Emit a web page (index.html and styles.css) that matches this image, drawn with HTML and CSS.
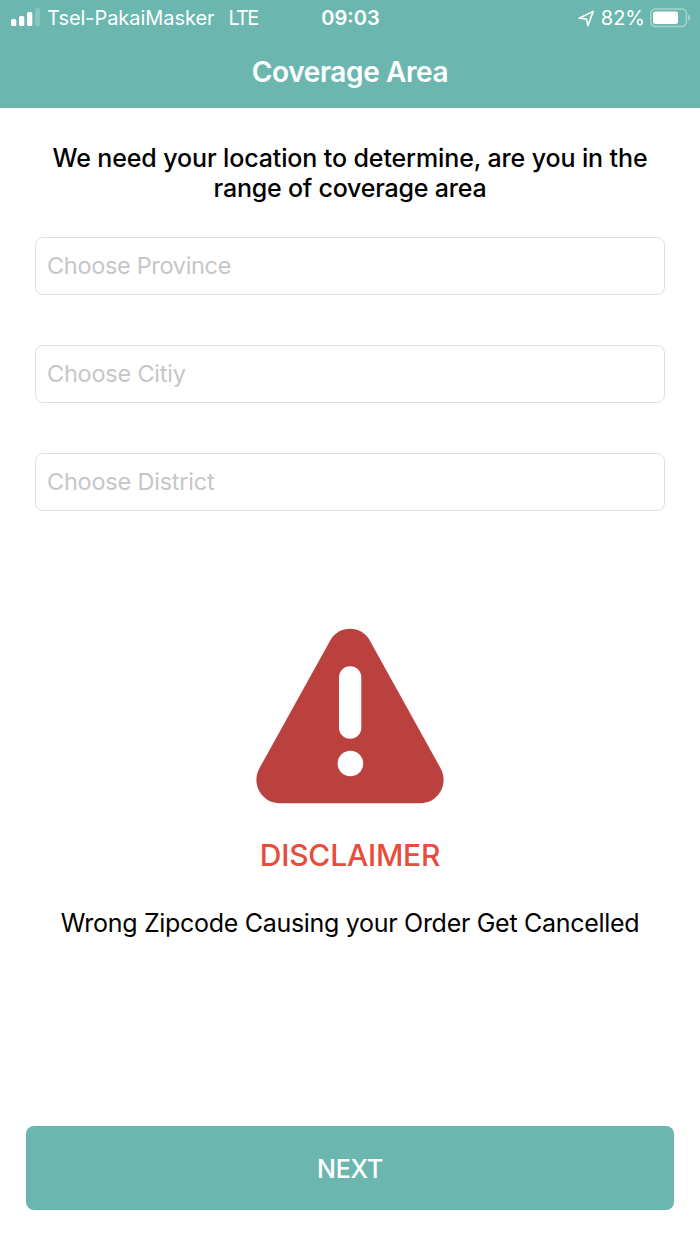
FILE: index.html
```
<!DOCTYPE html>
<html lang="en">

<head>
    <meta charset="UTF-8">
    <meta name="viewport" content="width=device-width, initial-scale=1.0">
    <title>Coverage Area</title>
    <link rel="stylesheet" href="styles.css">
</head>

<body>
    <header class="header">
        <div class="status">
            <div class="status-left">
                <svg class="signal" width="29" height="20" viewBox="0 0 29 20">
                    <rect x="0" y="11" width="5.3" height="7" rx="1.6" fill="#fff"/>
                    <rect x="8" y="8" width="5.3" height="10" rx="1.6" fill="#fff"/>
                    <rect x="16" y="4" width="5.3" height="14" rx="1.6" fill="#fff"/>
                    <rect x="24" y="0" width="5" height="18" rx="1.6" fill="#fff" opacity=".2"/>
                </svg>
                <span class="carrier">Tsel-PakaiMasker</span>
                <span class="network">LTE</span>
            </div>
            <div class="clock">09:03</div>
            <div class="status-right">
                <svg class="arrow" width="17" height="17" viewBox="0 0 17 17">
                    <path d="M1.2 8.3L15.2 1.4L9.9 15.6L8.3 9Z" fill="none" stroke="#fff" stroke-width="1.6" stroke-linejoin="round"/>
                </svg>
                <span class="percent">82%</span>
                <svg class="battery" width="41" height="20" viewBox="0 0 41 20">
                    <rect x=".8" y="1" width="35.6" height="17.6" rx="4.5" fill="none" stroke="#fff" stroke-width="1.5" opacity=".4"/>
                    <rect x="3" y="3.6" width="25" height="12.4" rx="2.3" fill="#fff"/>
                    <path d="M38.2 6.6C40.9 7.8 40.9 11.9 38.2 13.1Z" fill="#fff" opacity=".4"/>
                </svg>
            </div>
        </div>
        <h1 class="title">Coverage Area</h1>
    </header>

    <main class="content">
        <p class="intro"><span>We need your location to determine, are you in the</span><br><span class="intro-end">range of coverage area</span></p>
        <form class="form">
            <input class="field province" type="text" placeholder="Choose Province">
            <input class="field city" type="text" placeholder="Choose Citiy">
            <input class="field district" type="text" placeholder="Choose District">
        </form>
        <svg class="warning" width="188" height="176" viewBox="0 0 188 176">
            <path d="M74.5 12C83-3 105-3 113.5 12L185 141C193 157 181.500 175.200 165 175.200H23C6.500 175.200-5 157 3 141Z" fill="#bb413e"/>
            <rect x="83" y="38.3" width="22.3" height="72.5" rx="11.1" fill="#fff"/>
            <circle cx="94.4" cy="135.5" r="12.8" fill="#fff"/>
        </svg>
        <h2 class="disclaimer">DISCLAIMER</h2>
        <p class="note">Wrong Zipcode Causing your Order Get Cancelled</p>
    </main>

    <button class="next" type="button">NEXT</button>
</body>

</html>
```
FILE: styles.css
```
* {
    margin: 0;
    padding: 0;
    box-sizing: border-box;
}
body {
    display: flex;
    flex-direction: column;
    height: 1244px;
    background-color: #fff;
    font-family: Inter, "Liberation Sans", sans-serif;
    color: #000;
}
.header {
    height: 108px;
    background-color: #6bb7b0;
    color: #fff;
}
.status {
    display: grid;
    grid-template-columns: 1fr auto 1fr;
    align-items: center;
    height: 36px;
    padding: 0 9px 0 11px;
    font-size: 20px;
    white-space: nowrap;
}
.status-left,
.status-right {
    display: flex;
    align-items: center;
}
.status-right {
    justify-content: flex-end;
}
.carrier {
    margin-left: 7px;
    letter-spacing: -0.05px;
}
.network {
    margin-left: 14px;
    letter-spacing: -1.8px;
}
.clock {
    margin-right: 1px;
    font-weight: 600;
}
.percent {
    margin: 0 5px 0 6px;
}
.title {
    font-size: 28px;
    font-weight: 600;
    line-height: 72px;
    letter-spacing: -0.4px;
    text-align: center;
}
.content {
    display: flex;
    flex-direction: column;
    align-items: center;
    padding: 35px 35px 0;
}
.intro {
    font-size: 25px;
    font-weight: 500;
    line-height: 30px;
    letter-spacing: -0.12px;
    text-align: center;
    white-space: nowrap;
}
.intro-end {
    letter-spacing: -0.22px;
}
.form {
    display: flex;
    flex-direction: column;
    gap: 50px;
    width: 100%;
    margin-top: 34px;
}
.field {
    height: 58px;
    padding: 0 11px 2px;
    border: 1px solid #dfdfdf;
    border-radius: 8px;
    font-family: inherit;
    font-size: 23.5px;
    letter-spacing: -0.33px;
}
.city,
.district {
    letter-spacing: -0.22px;
}
.field::placeholder {
    color: #c6c6c8;
}
.warning {
    margin-top: 117px;
}
.disclaimer {
    margin-top: 33px;
    font-size: 30px;
    font-weight: 550;
    line-height: 36px;
    letter-spacing: -0.2px;
    color: #e74c3c;
}
.note {
    margin-top: 35px;
    font-size: 25px;
    line-height: 30px;
    letter-spacing: -0.3px;
    white-space: nowrap;
}
.next {
    height: 84px;
    margin: auto 26px 34px;
    padding-top: 1px;
    border: 0;
    border-radius: 8px;
    background-color: #6bb7b0;
    color: #fff;
    font-family: inherit;
    font-size: 25px;
    font-weight: 550;
    letter-spacing: -0.2px;
}
```
